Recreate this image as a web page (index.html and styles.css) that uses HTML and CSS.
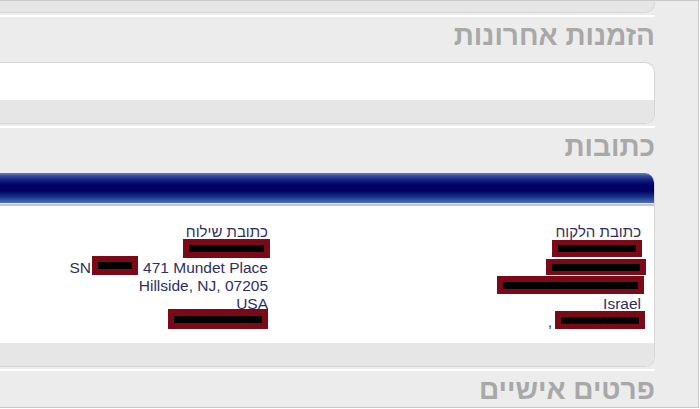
FILE: index.html
```html
<!DOCTYPE html>
<html lang="he">
<head>
<meta charset="utf-8">
<title>החשבון שלי</title>
<link rel="stylesheet" href="styles.css">
</head>
<body>
<div class="page">
  <div class="prev-box"></div>
  <div class="sep"></div>
  <h2 class="title">הזמנות אחרונות</h2>
  <div class="box">
    <div class="box-body empty"></div>
    <div class="box-foot"></div>
  </div>
  <div class="sep"></div>
  <h2 class="title">כתובות</h2>
  <div class="box box-blue">
    <div class="bar"></div>
    <div class="bar-line"></div>
    <div class="bar-gray"></div>
    <div class="box-body addr">
      <div class="col col-ship">
        <div class="line line-he">כתובת שילוח</div>
        <div class="line"><span class="rd rd-s1"><span class="rd-bar"></span></span></div>
        <div class="line"><span>SN</span><span class="rd rd-s2"><span class="rd-bar"></span></span><span>471 Mundet Place</span></div>
        <div class="line">Hillside, NJ, 07205</div>
        <div class="line">USA</div>
        <div class="line"><span class="rd rd-s3"><span class="rd-bar"></span></span></div>
      </div>
      <div class="col col-cust">
        <div class="line line-he">כתובת הלקוח</div>
        <div class="line"><span class="rd rd-c1"><span class="rd-bar"></span></span></div>
        <div class="line"><span class="rd rd-c2"><span class="rd-bar"></span></span></div>
        <div class="line"><span class="rd rd-c3"><span class="rd-bar"></span></span></div>
        <div class="line">Israel</div>
        <div class="line"><span class="comma">,</span><span class="rd rd-c4"><span class="rd-bar"></span></span></div>
      </div>
    </div>
    <div class="box-foot"></div>
  </div>
  <div class="sep"></div>
  <h2 class="title">פרטים אישיים</h2>
</div>
</body>
</html>
```

FILE: styles.css
```css
html, body {
  margin: 0;
  padding: 0;
  background: #ffffff;
}

body {
  font-family: "Liberation Sans", Arial, sans-serif;
}

.page {
  width: 699px;
  height: 408px;
  box-sizing: border-box;
  border: 1px solid #c9c9c9;
  border-left: 0;
  background: #ececec;
  padding-right: 43px;
  overflow: hidden;
}

.prev-box {
  height: 11px;
  background: #e6e6e6;
  border-bottom: 1px solid #d8d8d8;
  border-right: 1px solid #d8d8d8;
  border-radius: 0 0 10px 0;
}

.sep {
  height: 2px;
  margin-top: 2px;
  background: #ffffff;
}

.title {
  margin: 0;
  padding: 5px 0 12px;
  font-size: 28px;
  line-height: 28px;
  font-weight: bold;
  color: #a8a8a8;
  text-align: right;
}

.box {
  border: 1px solid #d6d6d6;
  border-left: 0;
  border-radius: 0 10px 10px 0;
  overflow: hidden;
  background: #ffffff;
}

.box-body.empty {
  height: 37px;
}

.box-foot {
  height: 23px;
  background: #e6e6e6;
}

.box-blue {
  border-top: 0;
}

.bar {
  height: 30px;
  background: linear-gradient(to bottom,
    #6a82c2 0px,
    #34499a 3px,
    #0c1c7a 8px,
    #000066 12px,
    #000063 18px,
    #17348a 24px,
    #4b72b8 30px);
}

.bar-line {
  height: 1px;
  background: #dfe5f1;
}

.bar-gray {
  height: 2px;
  background: #c6c6c6;
}

.addr {
  display: flex;
  padding: 17px 13px 12px 0;
}

.col {
  display: flex;
  flex-direction: column;
}

.col-ship {
  width: 268px;
  flex: 0 0 268px;
}

.col-cust {
  flex: 1 1 auto;
}

.line {
  display: flex;
  justify-content: flex-end;
  align-items: flex-start;
  height: 18px;
  line-height: 18px;
  font-size: 15.5px;
  color: #2f2f62;
  white-space: nowrap;
}

.line-he {
  font-size: 15px;
}

.rd {
  display: flex;
  align-items: center;
  box-sizing: border-box;
  padding: 0 6px;
  background: #7c0a16;
}

.rd-bar {
  flex: 1 1 auto;
  height: 7px;
  background: #000000;
}

.rd-s1 { width: 87px; height: 19px; margin-top: -2px; margin-right: -2px; }
.rd-s2 { width: 46px; height: 19px; margin-top: -3px; margin-left: 1px; margin-right: 5px; }
.rd-s3 { width: 100px; height: 20px; margin-top: -4px; }

.rd-c1 { width: 90px; height: 17px; margin-top: -1px; margin-right: -1px; }
.rd-c2 { width: 100px; height: 16px; margin-top: 0; margin-right: -5px; }
.rd-c3 { width: 147px; height: 18px; margin-top: -1px; margin-right: -3px; }
.rd-c4 { width: 90px; height: 18px; margin-top: -2px; margin-right: -4px; margin-left: 3px; }

.comma {
  line-height: 18px;
}
```
